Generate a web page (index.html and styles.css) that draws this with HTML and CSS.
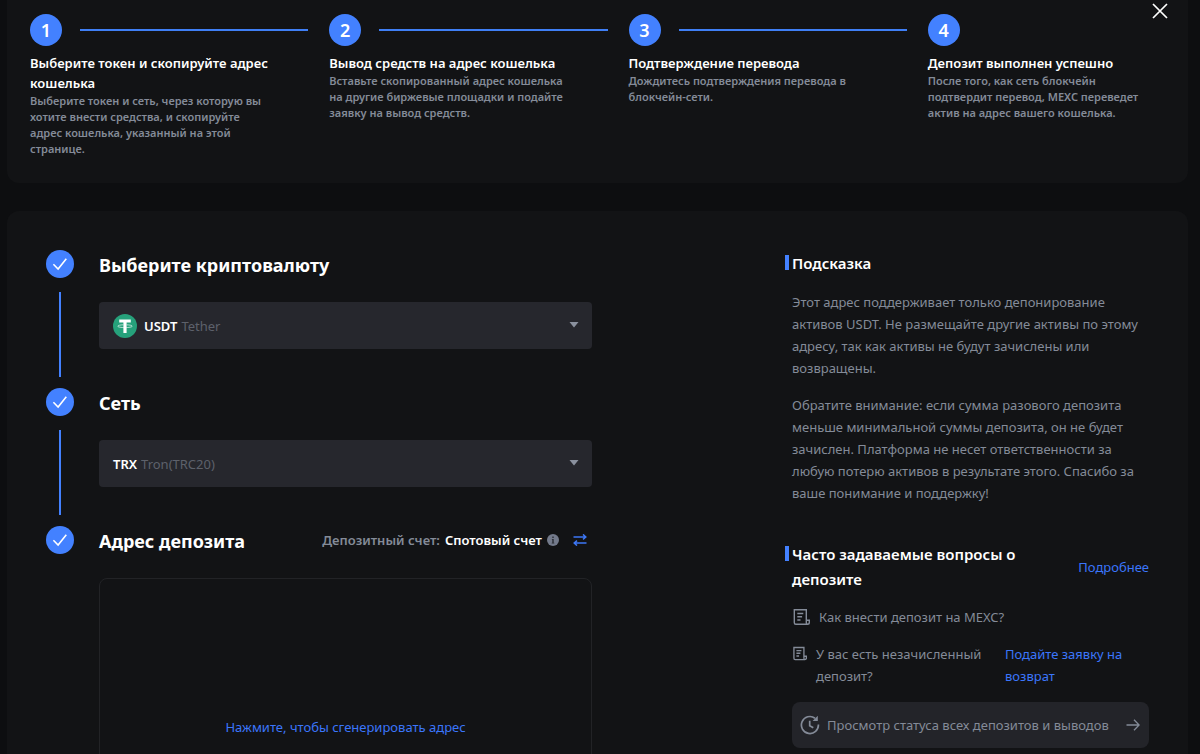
FILE: index.html
```html
<!DOCTYPE html>
<html lang="ru">
<head>
<meta charset="utf-8">
<meta name="viewport" content="width=device-width, initial-scale=1">
<title>Депозит</title>
<link rel="stylesheet" href="styles.css">
</head>
<body>
<section class="card guide">
  <button class="close" type="button" aria-label="Закрыть">
    <svg width="16" height="16" viewBox="0 0 16 16" fill="none" stroke="currentColor" stroke-width="1.7"><path d="M1 1l14 14M15 1L1 15"/></svg>
  </button>
  <ol class="steps">
    <li class="step">
      <div class="step-head"><span class="step-number">1</span><span class="step-line"></span></div>
      <h3 class="step-title">Выберите токен и скопируйте адрес кошелька</h3>
      <p class="step-text">Выберите токен и сеть, через которую вы хотите внести средства, и скопируйте адрес кошелька, указанный на этой странице.</p>
    </li>
    <li class="step">
      <div class="step-head"><span class="step-number">2</span><span class="step-line"></span></div>
      <h3 class="step-title">Вывод средств на адрес кошелька</h3>
      <p class="step-text">Вставьте скопированный адрес кошелька на другие биржевые площадки и подайте заявку на вывод средств.</p>
    </li>
    <li class="step">
      <div class="step-head"><span class="step-number">3</span><span class="step-line"></span></div>
      <h3 class="step-title">Подтверждение перевода</h3>
      <p class="step-text">Дождитесь подтверждения перевода в блокчейн-сети.</p>
    </li>
    <li class="step">
      <div class="step-head"><span class="step-number">4</span></div>
      <h3 class="step-title">Депозит выполнен успешно</h3>
      <p class="step-text">После того, как сеть блокчейн подтвердит перевод, MEXC переведет актив на адрес вашего кошелька.</p>
    </li>
  </ol>
</section>

<main class="card deposit">
  <div class="form">
    <section class="stage">
      <div class="rail">
        <span class="tick"><svg width="28" height="28" viewBox="0 0 28 28" fill="none" stroke="currentColor" stroke-width="1.6"><path d="M7.400 14.300l4.700 4.700L20.300 8.800"/></svg></span>
        <span class="rail-line"></span>
      </div>
      <div class="stage-body">
        <label class="stage-title" for="coin">Выберите криптовалюту</label>
        <div class="picker">
          <svg class="coin" width="24" height="24" viewBox="0 0 24 24"><circle cx="12" cy="12" r="12" fill="#26a17b"/><path fill="#fff" d="M6.200 5.600h11.600v3h-4.200v10.400h-3.200V8.600H6.200z"/><path fill="none" stroke="#fff" stroke-width=".8" opacity=".8" d="M10.400 10.800c-3 .1-5.600.6-5.600 1.400s3.200 1.400 7.200 1.400 7.200-.6 7.200-1.400-2.600-1.300-5.600-1.400"/></svg>
          <span class="ticker">USDT</span>
          <select class="picker-select" id="coin"><option>Tether</option></select>
          <svg class="caret" width="10" height="6" viewBox="0 0 10 6"><path d="M.5 0h9L5 5.600z" fill="currentColor"/></svg>
        </div>
      </div>
    </section>

    <section class="stage">
      <div class="rail">
        <span class="tick"><svg width="28" height="28" viewBox="0 0 28 28" fill="none" stroke="currentColor" stroke-width="1.6"><path d="M7.400 14.300l4.700 4.700L20.300 8.800"/></svg></span>
        <span class="rail-line"></span>
      </div>
      <div class="stage-body">
        <label class="stage-title" for="network">Сеть</label>
        <div class="picker">
          <span class="ticker">TRX</span>
          <select class="picker-select" id="network"><option>Tron(TRC20)</option></select>
          <svg class="caret" width="10" height="6" viewBox="0 0 10 6"><path d="M.5 0h9L5 5.600z" fill="currentColor"/></svg>
        </div>
      </div>
    </section>

    <section class="stage">
      <div class="rail">
        <span class="tick"><svg width="28" height="28" viewBox="0 0 28 28" fill="none" stroke="currentColor" stroke-width="1.6"><path d="M7.400 14.300l4.700 4.700L20.300 8.800"/></svg></span>
      </div>
      <div class="stage-body">
        <div class="stage-row">
          <h2 class="stage-title">Адрес депозита</h2>
          <div class="account">
            <span class="account-label">Депозитный счет:</span>
            <span class="account-name">Спотовый счет</span>
            <svg class="info" width="12" height="12" viewBox="0 0 12 12"><circle cx="6" cy="6" r="6" fill="#737a8b"/><path fill="#2a2d34" d="M5.300 2.500h1.400v1.400H5.300zM4.900 5h1.800v3.800h.6v.7H4.700v-.7h.6V5.700h-.4z"/></svg>
            <button class="swap" type="button" aria-label="Сменить счет">
              <svg width="14" height="12" viewBox="0 0 14 12" fill="none" stroke="currentColor" stroke-width="1.500"><path d="M.5 3H12.800M10 .4L12.800 3 10 5.400M13.500 9H1.200M4 6.600L1.200 9 4 11.600"/></svg>
            </button>
          </div>
        </div>
        <div class="address-box">
          <button class="generate" type="button">Нажмите, чтобы сгенерировать адрес</button>
        </div>
      </div>
    </section>
  </div>

  <aside class="help">
    <h2 class="help-title">Подсказка</h2>
    <p class="help-text">Этот адрес поддерживает только депонирование активов USDT. Не размещайте другие активы по этому адресу, так как активы не будут зачислены или возвращены.</p>
    <p class="help-text">Обратите внимание: если сумма разового депозита меньше минимальной суммы депозита, он не будет зачислен. Платформа не несет ответственности за любую потерю активов в результате этого. Спасибо за ваше понимание и поддержку!</p>
    <div class="faq-head">
      <h2 class="help-title">Часто задаваемые вопросы о депозите</h2>
      <a class="link" href="#faq">Подробнее</a>
    </div>
    <a class="faq-item" href="#how">
      <svg width="18" height="18" viewBox="0 0 18 18" fill="none" stroke="currentColor" stroke-width="1.400"><path d="M14.300 12.300V1.800H2.300v13q0 1.500 1.500 1.500h11.700q1.800 0 1.800-1.800v-2.200h-3v2.500q0 1.300 1.200 1.500M5.300 5.500h6M5.300 8.700h4.800M5.300 12h3.200"/></svg>
      <span>Как внести депозит на MEXC?</span>
    </a>
    <div class="claim">
      <svg width="15" height="15" viewBox="0 0 18 18" fill="none" stroke="currentColor" stroke-width="1.600"><path d="M14.300 12.300V1.800H2.300v13q0 1.500 1.500 1.500h11.700q1.800 0 1.800-1.800v-2.200h-3v2.500q0 1.300 1.200 1.500M5.300 5.500h6M5.300 8.700h4.800M5.300 12h3.200"/></svg>
      <span class="claim-text">У вас есть незачисленный депозит?</span>
      <a class="link claim-link" href="#claim">Подайте заявку на возврат</a>
    </div>
    <a class="status" href="#history">
      <svg width="20" height="20" viewBox="0 0 20 20" fill="none" stroke="currentColor" stroke-width="1.700"><path d="M18.400 9.500A8.500 8.500 0 1 1 15 3.200M9.700 5.800v5l3.600 2"/><path d="M17.800.8v5.200h-5.200z" fill="currentColor" stroke="none"/></svg>
      <span class="status-text">Просмотр статуса всех депозитов и выводов</span>
      <svg width="14" height="12" viewBox="0 0 14 12" fill="none" stroke="currentColor" stroke-width="1.300"><path d="M.5 6h12.500M8 .8L13.100 6 8 11.200"/></svg>
    </a>
  </aside>
</main>
</body>
</html>
```
FILE: styles.css
```css
* {
  box-sizing: border-box;
}

body {
  margin: 0;
  padding: 0 12px 0 7px;
  background: #0d0e10;
  color: #fff;
  font: 13px/22px "Noto Sans", "Open Sans", sans-serif;
}

h2, h3, p, ol {
  margin: 0;
  padding: 0;
}

button {
  padding: 0;
  border: 0;
  background: none;
  font: inherit;
  cursor: pointer;
}

svg {
  display: block;
  flex: none;
}

a {
  color: inherit;
  text-decoration: none;
}

.card {
  position: relative;
  background: #121315;
  border-radius: 12px;
}

.guide {
  padding: 14px 22px 26px 23px;
  border-radius: 0 0 12px 12px;
}

.close {
  position: absolute;
  top: 3px;
  right: 20px;
  color: #fff;
}

.steps {
  display: grid;
  grid-template-columns: repeat(4, 1fr);
  column-gap: 61px;
  list-style: none;
}

.step-head {
  display: flex;
  align-items: center;
  gap: 18px;
  margin-right: -40px;
}

.step-number {
  display: grid;
  place-items: center;
  width: 32px;
  height: 32px;
  border-radius: 50%;
  background: #4381ff;
  font-size: 18px;
  font-weight: 600;
}

.step-line {
  flex: 1;
  height: 2px;
  background: #3f7ff5;
}

.step-title {
  margin-top: 7px;
  font-size: 13px;
  line-height: 20px;
  font-weight: 600;
}

.step-text {
  color: #848b98;
  font-size: 11px;
  line-height: 16px;
  font-weight: 600;
}

.step:last-child .step-text {
  padding-right: 16px;
}

.deposit {
  display: grid;
  grid-template-columns: minmax(0, 546px) minmax(0, 364px);
  justify-content: space-between;
  margin-top: 28px;
  padding: 39px 39px 40px;
}

.stage {
  display: flex;
  gap: 25px;
  min-height: 138px;
}

.rail {
  display: flex;
  flex-direction: column;
  align-items: center;
}

.tick {
  border-radius: 50%;
  background: #4381ff;
}

.rail-line {
  flex: 1;
  width: 2px;
  margin: 14px 0 11px;
  background: #4381ff;
}

.stage-body {
  flex: 1;
  min-width: 0;
}

.stage-row {
  display: flex;
  justify-content: space-between;
}

.stage-title {
  display: block;
  font-size: 18px;
  line-height: 30px;
  font-weight: 700;
}

.picker {
  position: relative;
  display: flex;
  align-items: center;
  height: 47px;
  margin-top: 22px;
  padding-left: 14px;
  border-radius: 4px;
  background: #26272d;
}

.coin {
  margin-right: 7px;
}

.ticker {
  font-weight: 600;
}

.picker-select {
  flex: 1;
  align-self: stretch;
  min-width: 0;
  padding: 0 32px 0 4px;
  border: 0;
  background: none;
  appearance: none;
  color: #5d616b;
  font: inherit;
}

.caret {
  position: absolute;
  top: 20px;
  right: 13px;
  color: #8a919e;
  pointer-events: none;
}

.account {
  display: flex;
  align-items: center;
  gap: 5px;
  height: 28px;
  padding-right: 5px;
  font-weight: 600;
}

.account-label {
  color: #848b98;
}

.swap {
  margin-left: 9px;
  color: #3d77f5;
}

.address-box {
  display: flex;
  justify-content: center;
  align-items: flex-start;
  height: 300px;
  margin-top: 22px;
  padding-top: 137px;
  border: 1px solid #222326;
  border-radius: 8px;
}

.generate,
.link {
  color: #3b76fb;
}

.help {
  padding: 1px 0 0 7px;
}

.help-title {
  margin-left: -7px;
  padding-left: 7px;
  background: linear-gradient(#4381ff, #4381ff) 0 4px / 4px 15px no-repeat;
  font-size: 15px;
  line-height: 25px;
  font-weight: 600;
}

.help-text {
  margin-top: 15px;
  color: #848b98;
}

.faq-head {
  display: flex;
  align-items: center;
  justify-content: space-between;
  gap: 32px;
  margin-top: 38px;
}

.faq-item,
.claim {
  display: flex;
  color: #848b98;
}

.faq-item {
  align-items: center;
  gap: 9px;
  margin-top: 14px;
}

.claim {
  gap: 9px;
  margin-top: 15px;
}

.claim svg {
  margin-top: 3px;
}

.claim-text {
  width: 180px;
}

.claim-link {
  flex: 1;
}

.status {
  display: flex;
  align-items: center;
  gap: 7px;
  height: 46px;
  margin-top: 15px;
  padding: 0 9px 0 8px;
  border-radius: 8px;
  background: #232429;
  color: #848b98;
}

.status-text {
  flex: 1;
  white-space: nowrap;
}
```
